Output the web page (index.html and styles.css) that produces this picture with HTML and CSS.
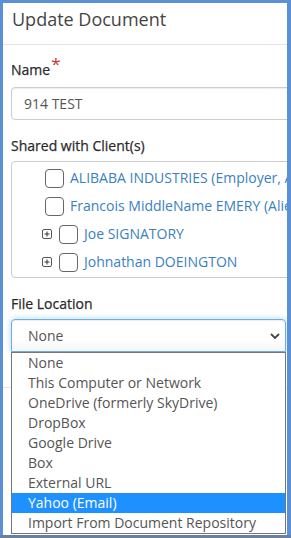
FILE: index.html
```html
<!DOCTYPE html>
<html lang="en">
<head>
  <meta charset="UTF-8">
  <meta name="viewport" content="width=device-width, initial-scale=1.0">
  <title>Update Document</title>
  <link rel="stylesheet" href="styles.css">
</head>
<body>
  <div class="modal">
    <div class="modal-header">
      <h4 class="modal-title">Update Document</h4>
    </div>

    <div class="modal-body">
      <div class="form-group">
        <label class="control-label label-required">Name<span class="required">*</span></label>
        <div class="form-control">914 TEST</div>
      </div>

      <div class="form-group">
        <label class="control-label">Shared with Client(s)</label>
        <div class="client-tree">
          <div class="tree-row">
            <span class="checkbox"></span>
            <a class="client-link">ALIBABA INDUSTRIES (Employer, Applicant)</a>
          </div>
          <div class="tree-row">
            <span class="checkbox"></span>
            <a class="client-link">Francois MiddleName EMERY (Alien)</a>
          </div>
          <div class="tree-row tree-row-parent">
            <span class="expander">
              <svg width="10" height="10" viewBox="0 0 10 10"><rect x="0.5" y="0.5" width="9" height="9" rx="1.5" fill="#fff" stroke="#555"/><path d="M2.5 5h5M5 2.5v5" stroke="#333" stroke-width="1"/></svg>
            </span>
            <span class="checkbox"></span>
            <a class="client-link">Joe SIGNATORY</a>
          </div>
          <div class="tree-row tree-row-parent">
            <span class="expander">
              <svg width="10" height="10" viewBox="0 0 10 10"><rect x="0.5" y="0.5" width="9" height="9" rx="1.5" fill="#fff" stroke="#555"/><path d="M2.5 5h5M5 2.5v5" stroke="#333" stroke-width="1"/></svg>
            </span>
            <span class="checkbox"></span>
            <a class="client-link">Johnathan DOEINGTON</a>
          </div>
        </div>
      </div>

      <div class="form-group location-group">
        <label class="control-label">File Location</label>
        <div class="select-wrap">
          <div class="select-box">
            <span>None</span>
            <svg class="chevron" width="10" height="6" viewBox="0 0 10 6"><path d="M1 1l4 4 4-4" fill="none" stroke="#444" stroke-width="1.8"/></svg>
          </div>
          <ul class="select-menu">
            <li>None</li>
            <li>This Computer or Network</li>
            <li>OneDrive (formerly SkyDrive)</li>
            <li>DropBox</li>
            <li>Google Drive</li>
            <li>Box</li>
            <li>External URL</li>
            <li class="active">Yahoo (Email)</li>
            <li>Import From Document Repository</li>
          </ul>
        </div>
      </div>
    </div>

    <div class="modal-footer"></div>
  </div>
</body>
</html>
```

FILE: styles.css
```css
html, body {
  margin: 0;
  padding: 0;
}
body {
  font-family: "Open Sans", "Liberation Sans", sans-serif;
  font-size: 14px;
  line-height: 20px;
  color: #333;
  background: linear-gradient(to bottom, #5b8fd6 535px, #6b809f 535px);
  height: 538px;
  overflow: hidden;
}
.modal {
  margin: 3px 0 0 3px;
  width: 284px;
  height: 532px;
  background-color: #fff;
  overflow: hidden;
}
.modal-header {
  padding: 4px 12px 12px 9px;
  border-bottom: 1px solid #e5e5e5;
  width: 330px;
}
.modal-title {
  margin: 0;
  font-size: 18px;
  line-height: 25px;
  font-weight: 400;
  color: #444;
}
.modal-body {
  width: 330px;
  padding: 15px 0 0 8px;
}
.form-group {
  margin-bottom: 16px;
}
.control-label {
  display: block;
  font-weight: 400;
  margin-bottom: 5px;
  color: #2b2b2b;
  -webkit-text-stroke: 0.25px #2b2b2b;
}
.label-required {
  margin-bottom: 7px;
}
.required {
  color: #d0312d;
  font-size: 17px;
  font-weight: 400;
  line-height: 0;
  vertical-align: 5px;
  margin-left: 1px;
  -webkit-text-stroke: 0;
}
.form-control {
  box-sizing: border-box;
  height: 33px;
  padding: 6px 12px;
  border: 1px solid #ccc;
  border-radius: 4px;
  color: #555;
  box-shadow: inset 0 1px 1px rgba(0, 0, 0, 0.075);
}
.client-tree {
  border: 1px solid #ccc;
  border-radius: 4px;
  padding: 2px 0 1px;
}
.tree-row {
  display: flex;
  align-items: center;
  height: 28px;
  padding-left: 33px;
  white-space: nowrap;
}
.tree-row-parent {
  padding-left: 30px;
}
.expander {
  display: flex;
  width: 10px;
  height: 10px;
  margin-right: 7px;
}
.checkbox {
  box-sizing: border-box;
  flex: none;
  width: 19px;
  height: 19px;
  border: 1px solid #666;
  border-radius: 4px;
  background-color: #fff;
  margin-right: 6px;
}
.client-link {
  color: #3a7fc1;
  text-decoration: none;
}
.location-group {
  margin-bottom: 35px;
}
.select-wrap {
  position: relative;
  width: 275px;
}
.select-box {
  box-sizing: border-box;
  display: flex;
  align-items: center;
  justify-content: space-between;
  height: 33px;
  padding: 0 5px 0 16px;
  border: 1px solid #66afe9;
  border-radius: 4px 4px 0 0;
  color: #555;
  background: linear-gradient(to bottom, #fff 60%, #f6f6f6);
  box-shadow: inset 0 1px 1px rgba(0, 0, 0, 0.075), 0 0 6px rgba(102, 175, 233, 0.5);
}
.chevron {
  display: block;
}
.select-menu {
  position: absolute;
  top: 100%;
  left: 0;
  right: 0;
  margin: 0;
  padding: 0;
  list-style: none;
  background-color: #fff;
  border: 1px solid #767676;
  z-index: 2;
}
.select-menu li {
  height: 20px;
  line-height: 20px;
  padding-left: 16px;
  color: #555;
  white-space: nowrap;
}
.select-menu li.active {
  background-color: #1e90ff;
  color: #fff;
}
.modal-footer {
  border-top: 1px solid #e5e5e5;
  height: 140px;
}
```
